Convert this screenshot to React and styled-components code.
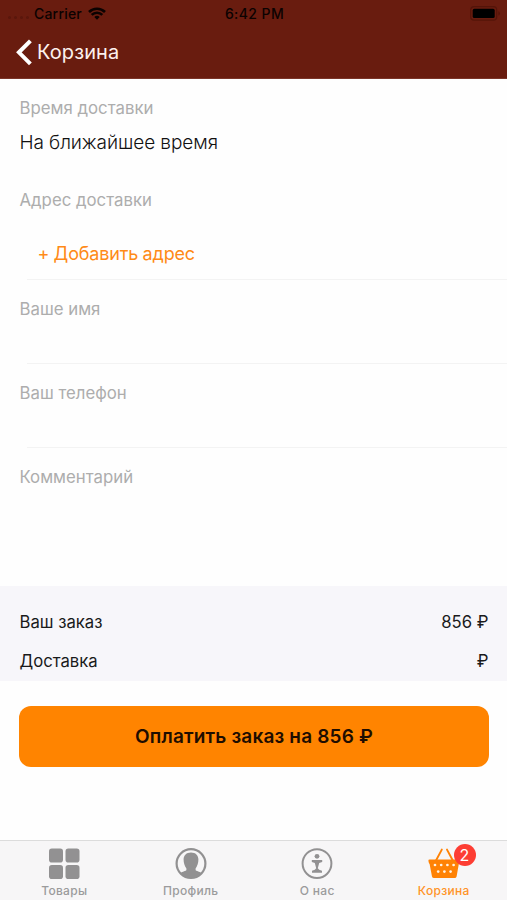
import React from "react";
import styled, { createGlobalStyle } from "styled-components";

const fields = ["Ваше имя", "Ваш телефон"];

function App() {
  return (
    <Screen>
      <GlobalStyle />
      <Header>
        <StatusBar>
          <Carrier>
            <SignalDots>
              <i />
              <i />
              <i />
              <i />
            </SignalDots>
            <span>Carrier</span>
            <WifiIcon />
          </Carrier>
          <Time>6:42 PM</Time>
          <BatteryIcon />
        </StatusBar>
        <NavBar>
          <BackIcon />
          <NavTitle>Корзина</NavTitle>
        </NavBar>
      </Header>
      <Form>
        <TimeField>
          <Label>Время доставки</Label>
          <Value>На ближайшее время</Value>
        </TimeField>
        <AddressField>
          <Label>Адрес доставки</Label>
          <AddButton>+ Добавить адрес</AddButton>
        </AddressField>
        {fields.map((label) => (
          <Field key={label}>
            <Label>{label}</Label>
          </Field>
        ))}
        <CommentField>
          <Label>Комментарий</Label>
        </CommentField>
      </Form>
      <Summary>
        <SummaryRow>
          <span>Ваш заказ</span>
          <span>856 ₽</span>
        </SummaryRow>
        <SummaryRow>
          <span>Доставка</span>
          <span>₽</span>
        </SummaryRow>
      </Summary>
      <PayArea>
        <PayButton>Оплатить заказ на 856 ₽</PayButton>
      </PayArea>
      <TabBar>
        <Tab>
          <GridIcon />
          <TabLabel>Товары</TabLabel>
        </Tab>
        <Tab>
          <ProfileIcon />
          <TabLabel>Профиль</TabLabel>
        </Tab>
        <Tab>
          <InfoIcon />
          <TabLabel>О нас</TabLabel>
        </Tab>
        <Tab $active>
          <BasketIcon />
          <Badge>2</Badge>
          <TabLabel>Корзина</TabLabel>
        </Tab>
      </TabBar>
    </Screen>
  );
}

function WifiIcon() {
  return (
    <svg width="18" height="13" viewBox="0 0 18 13" fill="#0b0201">
      <path d="M9 12.8 L6.3 10.1 A3.9 3.9 0 0 1 11.7 10.1 Z" />
      <path
        d="M3.7 7.9 A7.5 7.5 0 0 1 14.3 7.9 M1 5 A11.4 11.4 0 0 1 17 5"
        fill="none"
        stroke="#0b0201"
        strokeWidth="2.6"
      />
    </svg>
  );
}

function BatteryIcon() {
  return (
    <svg width="31" height="15" viewBox="0 0 31 15">
      <rect
        x="0.7"
        y="0.7"
        width="26"
        height="13.4"
        rx="3.4"
        fill="none"
        stroke="#541409"
        strokeWidth="1.2"
      />
      <rect x="2.7" y="2.8" width="22" height="9.2" rx="1.6" fill="#000" />
      <path d="M28.4 5 Q31.6 7.4 28.4 9.8 Z" fill="#541409" />
    </svg>
  );
}

function BackIcon() {
  return (
    <svg width="16" height="27" viewBox="0 0 16 27">
      <path
        d="M14.4 1.8 L2.9 13.3 L14.4 24.8"
        fill="none"
        stroke="#fff"
        strokeWidth="4"
      />
    </svg>
  );
}

function GridIcon() {
  return (
    <svg width="32" height="32" viewBox="0 0 32 32" fill="#929192">
      <rect x="1" y="0.6" width="14" height="14" rx="2.8" />
      <rect x="17.5" y="0.6" width="14" height="14" rx="2.8" />
      <rect x="1" y="17" width="14" height="14" rx="2.8" />
      <rect x="17.5" y="17" width="14" height="14" rx="2.8" />
    </svg>
  );
}

function ProfileIcon() {
  return (
    <svg width="32" height="32" viewBox="0 0 32 32">
      <circle
        cx="16"
        cy="15.6"
        r="14.4"
        fill="none"
        stroke="#929192"
        strokeWidth="2.2"
      />
      <path
        d="M16 4.6 C11.4 4.6 8.6 7.4 8.6 11.6 C8.6 15 9.6 18.2 11.4 20.4 V22 C11 23.2 7.6 23.4 5.4 25 A14 14 0 0 0 26.6 25 C24.4 23.4 21 23.2 20.6 22 V20.4 C22.4 18.2 23.4 15 23.4 11.6 C23.4 7.4 20.6 4.6 16 4.6 Z"
        fill="#929192"
      />
    </svg>
  );
}

function InfoIcon() {
  return (
    <svg width="32" height="32" viewBox="0 0 32 32">
      <circle
        cx="16"
        cy="15.6"
        r="14.4"
        fill="none"
        stroke="#929192"
        strokeWidth="2"
      />
      <circle cx="16" cy="8.3" r="2.4" fill="#929192" />
      <path
        d="M10.8 12.1 H21.2 V13.9 L18.2 15 L16.8 20.2 L18.2 21.8 L21 22.8 V24.7 H11 V22.8 L13.8 21.8 L15.2 20.2 L13.8 15 L10.8 13.9 Z"
        fill="#929192"
      />
    </svg>
  );
}

function BasketIcon() {
  const holes = [
    [7, 17],
    [13.2, 17],
    [19.4, 17],
    [25.6, 17],
    [10.2, 23.6],
    [16.4, 23.6],
    [22.6, 23.6],
  ];

  return (
    <svg width="32" height="32" viewBox="0 0 32 32">
      <path
        d="M8 12.5 L13.8 1.6 M24.8 12.5 L19 1.6"
        stroke="#ff8204"
        strokeWidth="1.9"
        strokeLinecap="round"
      />
      <path
        d="M1.6 11.4 H30.6 Q32 11.4 31.8 12.8 L31.6 14.2 Q31.4 15.4 30.8 16 L28.6 28.4 Q28.2 30 26.6 30 H6 Q4.4 30 4 28.4 L1.6 16 Q0.9 15.4 0.7 14.2 L0.4 12.8 Q0.2 11.4 1.6 11.4 Z"
        fill="#ff8204"
      />
      {holes.map(([x, y]) => (
        <circle key={`${x}-${y}`} cx={x} cy={y} r="1.35" fill="#fff3e4" />
      ))}
    </svg>
  );
}

const GlobalStyle = createGlobalStyle`
  * {
    box-sizing: border-box;
  }

  body {
    margin: 0;
    background: #fefefe;
    font-family: Inter, "Liberation Sans", sans-serif;
  }

  svg {
    display: block;
    flex-shrink: 0;
  }
`;

const Screen = styled.div`
  display: flex;
  flex-direction: column;
  width: 507px;
  height: 900px;
  overflow: hidden;
`;

const Header = styled.header`
  height: 79px;
  background: #691c0f;
  border-bottom: 1px solid #7b3529;
`;

const StatusBar = styled.div`
  display: grid;
  grid-template-columns: 1fr auto 1fr;
  align-items: center;
  height: 26px;
  padding: 0 6px 0 8px;
  color: #0b0201;
  font-size: 14px;
  font-weight: 500;

  > svg {
    justify-self: end;
  }
`;

const Carrier = styled.div`
  display: flex;
  align-items: center;
  letter-spacing: 0.2px;

  svg {
    margin-left: 6px;
  }
`;

const SignalDots = styled.div`
  display: flex;
  gap: 3px;
  width: 26px;
  padding-top: 8px;

  i {
    width: 3px;
    height: 3px;
    border-radius: 50%;
    background: #5a170c;
  }
`;

const Time = styled.div`
  letter-spacing: 0.4px;
`;

const NavBar = styled.div`
  display: flex;
  align-items: center;
  gap: 5px;
  height: 52px;
  padding-left: 16px;
`;

const NavTitle = styled.h1`
  margin: 0;
  color: #fdf1ee;
  font-size: 20px;
  font-weight: 400;
  letter-spacing: 0.1px;
`;

const Form = styled.main`
  height: 507px;
`;

const Label = styled.div`
  color: #adadad;
  font-size: 16.8px;
  line-height: 20px;
`;

const TimeField = styled.section`
  height: 92px;
  padding: 19px 19.5px 0;
`;

const Value = styled.div`
  margin-top: 13px;
  color: #111;
  font-size: 19px;
  font-weight: 300;
  line-height: 24px;
  letter-spacing: -0.08px;
`;

const Field = styled.section`
  position: relative;
  height: 84px;
  padding: 20px 19.5px 0;

  &::after {
    content: "";
    position: absolute;
    right: 0;
    bottom: -1px;
    left: 27px;
    height: 1px;
    background: #f3f3f3;
  }
`;

const AddressField = styled(Field)`
  height: 108px;
  padding-top: 19px;
`;

const CommentField = styled.section`
  padding: 20px 19.5px 0;
`;

const AddButton = styled.button`
  display: block;
  margin: 32px 0 0 18px;
  padding: 0;
  border: 0;
  background: none;
  color: #ff8a17;
  font: 400 18px/24px Inter, "Liberation Sans", sans-serif;
  letter-spacing: -0.15px;
  word-spacing: -0.6px;
`;

const Summary = styled.section`
  display: flex;
  flex-direction: column;
  gap: 15px;
  height: 95px;
  padding: 24px 18.5px 0 19.5px;
  background: #f7f6fa;
`;

const SummaryRow = styled.div`
  display: flex;
  justify-content: space-between;
  color: #1a1a1b;
  font-size: 16.7px;
  line-height: 24px;
`;

const PayArea = styled.div`
  flex: 1;
  padding: 25px 18px 0 19px;
`;

const PayButton = styled.button`
  display: block;
  width: 100%;
  height: 61px;
  padding: 0;
  border: 0;
  border-radius: 12px;
  background: #ff8400;
  color: #1e0d00;
  font: 600 19px/24px Inter, "Liberation Sans", sans-serif;
  letter-spacing: 0.17px;
`;

const TabBar = styled.nav`
  display: grid;
  grid-template-columns: repeat(4, 1fr);
  height: 60px;
  padding-left: 1px;
  border-top: 1px solid #dcdcdc;
  background: #f7f6f7;
`;

const Tab = styled.div`
  position: relative;
  display: flex;
  flex-direction: column;
  align-items: center;
  padding-top: 7px;
  color: ${(props) => (props.$active ? "#ff9328" : "#9b9b9c")};
`;

const TabLabel = styled.span`
  margin-top: 3px;
  font-size: 12px;
  font-weight: 500;
  line-height: 16px;
  letter-spacing: 0.3px;
`;

const Badge = styled.span`
  position: absolute;
  top: 3px;
  left: 73px;
  width: 22px;
  height: 22px;
  border-radius: 50%;
  background: #fd3d33;
  color: #fff;
  font-size: 16px;
  line-height: 22px;
  text-align: center;
`;

export default App;
